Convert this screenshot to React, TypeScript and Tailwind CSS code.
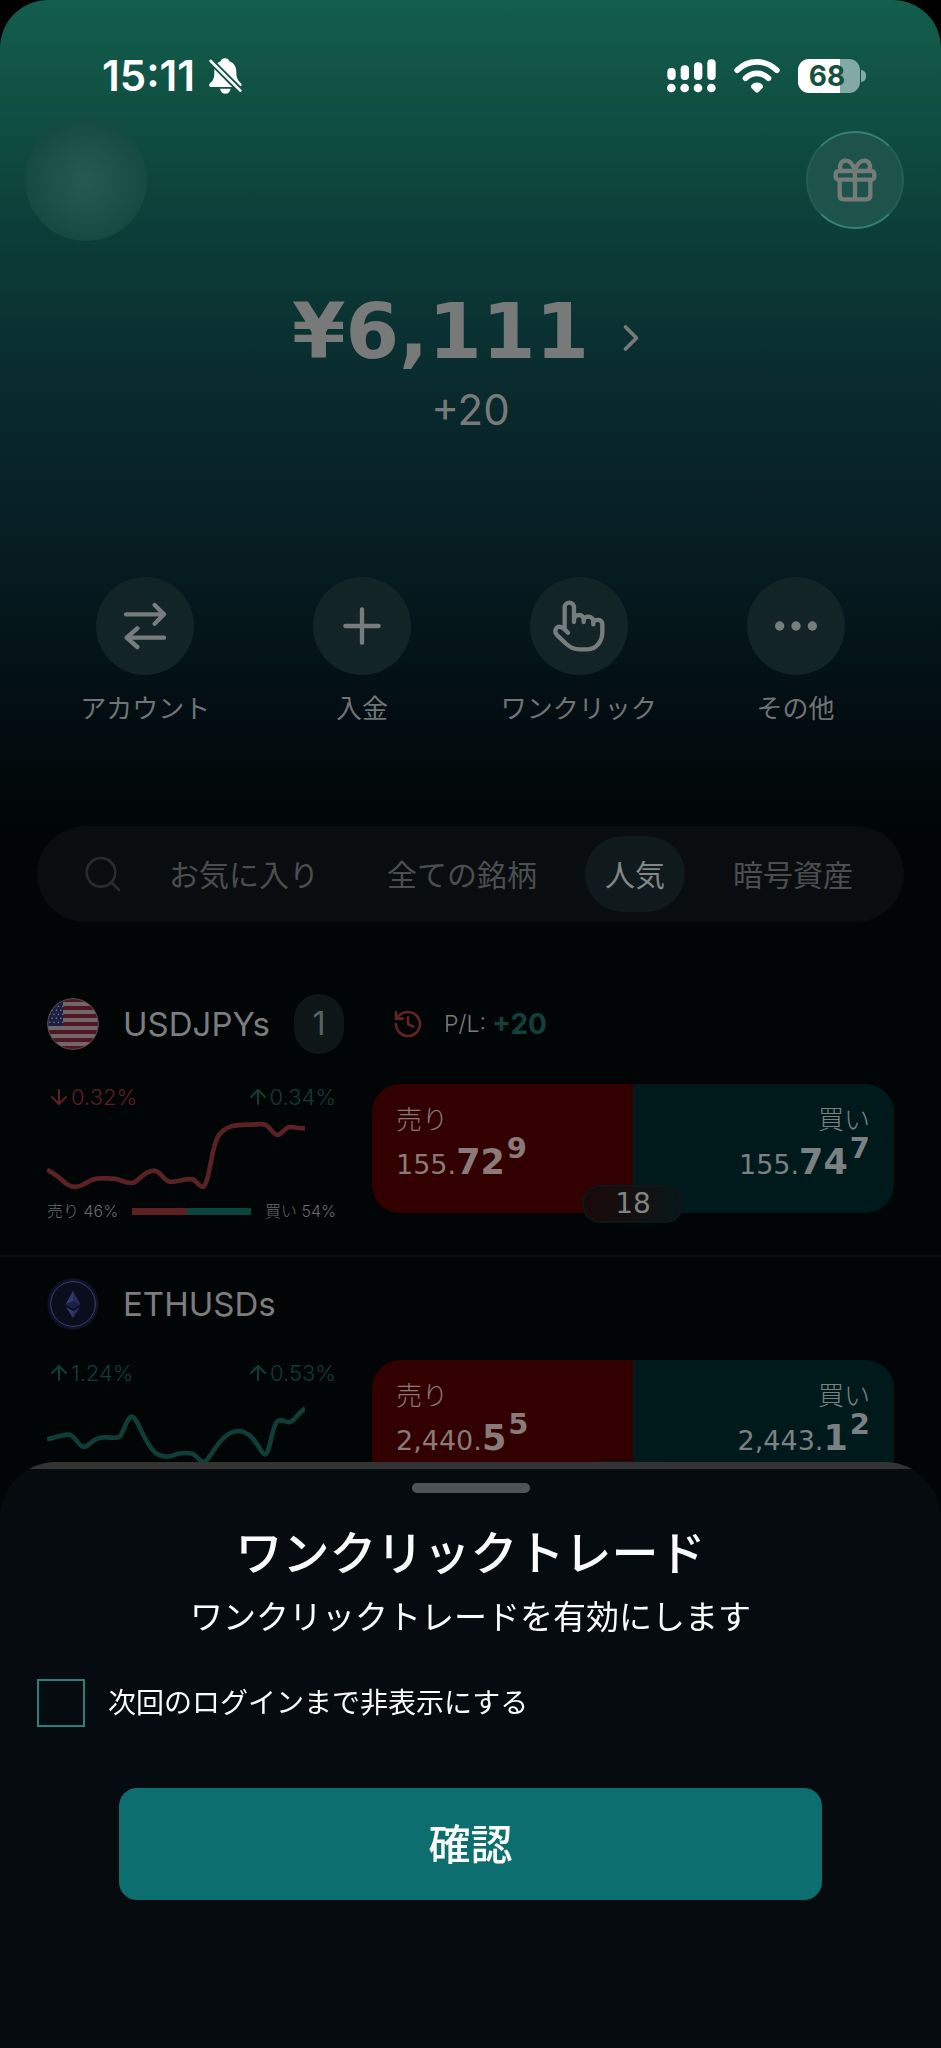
import { useState, type ReactNode } from 'react';
import { ArrowDown, ArrowUp, ChevronRight, History } from 'lucide-react';

type Trend = 'up' | 'down';

interface Quote {
  base: string;
  big: string;
  sup: string;
}

interface Instrument {
  symbol: string;
  icon: ReactNode;
  openCount?: number;
  profit?: string;
  low: { trend: Trend; value: string };
  high: { trend: Trend; value: string };
  chart: { path: string; trend: Trend };
  sellShare: number;
  sell: Quote;
  buy: Quote;
  spread: string;
}

function BellSlashIcon() {
  return (
    <svg viewBox="0 0 99 108" className="h-9 w-[33px]" aria-hidden="true">
      <mask id="bell-cut">
        <rect width="99" height="108" fill="#fff" />
        <path d="M-4 0L104 108" stroke="#000" strokeWidth="19" />
      </mask>
      <g mask="url(#bell-cut)" fill="#fff">
        <path d="M48 1c7 0 12 4 13 9 14 5 21 16 21 32 0 20 5 25 14 34 3 3 2 11-4 11H7c-7 0-8-7-4-11 10-9 13-14 13-34 0-16 6-27 19-32 1-5 6-9 13-9Z" />
        <path d="M33 92h32c-2 9-8 15-16 15s-14-6-16-15Z" />
      </g>
      <path d="M5 9l89 89" stroke="#fff" strokeWidth="8" strokeLinecap="round" />
    </svg>
  );
}

function SignalIcon() {
  return (
    <svg viewBox="0 0 147 102" className="h-[34px] w-[49px]" fill="#fff" aria-hidden="true">
      <rect x="1" y="27" width="25" height="36" rx="12" />
      <rect x="41" y="19" width="25" height="44" rx="12" />
      <rect x="81" y="10" width="25" height="53" rx="12" />
      <rect x="121" y="1" width="25" height="62" rx="12" />
      <circle cx="13" cy="87" r="13" />
      <circle cx="53" cy="87" r="13" />
      <circle cx="93" cy="87" r="13" />
      <circle cx="133" cy="87" r="13" />
    </svg>
  );
}

function WifiIcon() {
  return (
    <svg viewBox="0 0 137 102" className="h-[34px] w-[46px]" fill="none" aria-hidden="true">
      <path d="M9 34c33-34 85-34 119 0M34 58c20-20 49-20 69 0" stroke="#fff" strokeWidth="17" strokeLinecap="round" />
      <path d="M52 78c8-10 25-10 33 0 2 3 2 6 0 9L73 99c-3 3-6 3-9 0L52 87c-2-3-2-6 0-9Z" fill="#fff" />
    </svg>
  );
}

function GiftIcon() {
  return (
    <svg viewBox="0 0 132 132" className="size-11" fill="none" stroke="#757c78" strokeWidth="13" strokeLinejoin="round" aria-hidden="true">
      <rect x="8" y="39" width="116" height="26" rx="9" />
      <path d="M20 66v46q0 12 12 12h68q12 0 12-12V66M66 39v85" />
      <path d="M66 39C60 16 48 7 36 8c-14 2-20 19-10 31M66 39c6-23 18-32 30-31 14 2 20 19 10 31" />
    </svg>
  );
}

function TransferIcon() {
  return (
    <svg viewBox="0 0 144 144" className="size-12" fill="none" stroke="#777d7d" strokeWidth="13" strokeLinecap="round" strokeLinejoin="round" aria-hidden="true">
      <path d="M15 37h112M101 9l28 28-28 28M129 107H17M49 79l-32 28 32 28" />
    </svg>
  );
}

function PlusIcon() {
  return (
    <svg viewBox="0 0 144 144" className="size-12" fill="none" stroke="#777d7d" strokeWidth="13" strokeLinecap="round" aria-hidden="true">
      <path d="M22 72h100M72 22v100" />
    </svg>
  );
}

function HandIcon() {
  return (
    <svg viewBox="0 0 156 156" className="size-[52px]" fill="none" stroke="#777d7d" strokeWidth="13" strokeLinecap="round" strokeLinejoin="round" aria-hidden="true">
      <path d="M45 98L35 88V22a14 14 0 0 1 28 0v44" />
      <path d="M63 56c4-14 24-15 29 0v10M92 58c5-11 24-12 29 3v12" />
      <path d="M121 66c6-10 27-9 27 8v22c0 28-18 52-44 52H80c-16 0-28-5-40-16L13 106c-9-9-7-18-1-23s14-3 23 5" />
    </svg>
  );
}

function DotsIcon() {
  return (
    <svg viewBox="0 0 144 144" className="size-12" fill="#777d7d" aria-hidden="true">
      <circle cx="23" cy="72" r="14" />
      <circle cx="72" cy="72" r="14" />
      <circle cx="121" cy="72" r="14" />
    </svg>
  );
}

function SearchIcon() {
  return (
    <svg viewBox="0 0 108 108" className="size-9" fill="none" stroke="#282c2e" strokeWidth="8" strokeLinecap="round" aria-hidden="true">
      <circle cx="48" cy="49" r="43" />
      <path d="M80 80l22 22" />
    </svg>
  );
}

function UsFlag() {
  return (
    <svg viewBox="0 0 156 156" className="size-[52px] shrink-0" aria-hidden="true">
      <clipPath id="flag-clip">
        <circle cx="78" cy="78" r="76" />
      </clipPath>
      <g clipPath="url(#flag-clip)">
        <rect width="156" height="156" fill="#72666a" />
        <path d="M0 6h156M0 30h156M0 54h156M0 78h156M0 102h156M0 126h156M0 150h156" stroke="#4e1620" strokeWidth="12" />
        <rect width="48" height="84" fill="#1b2042" />
        <path d="M8 25h48M2 37h48M8 49h48M2 61h48M8 73h48" stroke="#72768a" strokeWidth="5" strokeLinecap="round" strokeDasharray="0.1 13" />
      </g>
      <circle cx="78" cy="78" r="76" fill="none" stroke="#564d51" strokeWidth="3" />
    </svg>
  );
}

function EthIcon() {
  return (
    <svg viewBox="0 0 156 156" className="size-[52px] shrink-0" aria-hidden="true">
      <circle cx="78" cy="78" r="77" fill="#0e1128" />
      <circle cx="78" cy="78" r="67" fill="#090d1c" stroke="#3e4163" strokeWidth="3" />
      <path d="M78 38L56 79l22 13Z" fill="#34396f" />
      <path d="M78 38l22 41-22 13Z" fill="#262b5c" />
      <path d="M58 79l20-11 20 11-20 13Z" fill="#1a1e48" />
      <path d="M56 86l22 13v21Z" fill="#34396f" />
      <path d="M100 86L78 99v21Z" fill="#262b5c" />
    </svg>
  );
}

const actions = [
  { label: 'アカウント', icon: <TransferIcon /> },
  { label: '入金', icon: <PlusIcon /> },
  { label: 'ワンクリック', icon: <HandIcon /> },
  { label: 'その他', icon: <DotsIcon /> },
];

const tabs = ['お気に入り', '全ての銘柄', '人気', '暗号資産'];

const instruments: Instrument[] = [
  {
    symbol: 'USDJPYs',
    icon: <UsFlag />,
    openCount: 1,
    profit: '+20',
    low: { trend: 'down', value: '0.32%' },
    high: { trend: 'up', value: '0.34%' },
    chart: {
      trend: 'down',
      path: 'M0 150C25 160 45 182 62 194C78 204 92 204 112 192C145 168 170 176 200 176C225 178 238 194 260 188C280 178 292 152 322 152C342 153 348 182 368 185C390 187 415 174 438 178C448 184 460 204 470 200C490 180 492 80 515 47C535 18 565 14 600 14C625 15 640 10 655 14C670 22 680 45 692 45C708 42 714 18 734 21C748 24 760 25 774 25',
    },
    sellShare: 46,
    sell: { base: '155.', big: '72', sup: '9' },
    buy: { base: '155.', big: '74', sup: '7' },
    spread: '18',
  },
  {
    symbol: 'ETHUSDs',
    icon: <EthIcon />,
    low: { trend: 'up', value: '1.24%' },
    high: { trend: 'up', value: '0.53%' },
    chart: {
      trend: 'up',
      path: 'M0 130C25 124 50 114 68 116C85 120 95 153 112 153C130 150 130 128 168 124C190 122 208 130 218 122C232 106 240 62 255 62C272 64 290 140 325 170C345 186 372 184 390 174C410 170 425 170 438 174C450 180 460 198 472 198C490 192 520 105 575 105C625 108 640 175 654 175C670 172 675 85 692 75C705 68 715 80 730 78C745 72 755 48 774 38',
    },
    sellShare: 52,
    sell: { base: '2,440.', big: '5', sup: '5' },
    buy: { base: '2,443.', big: '1', sup: '2' },
    spread: '257',
  },
];

function StatusBar() {
  return (
    <div className="flex h-[104px] items-end justify-between pr-[75px] pb-2 pl-[102px]">
      <div className="flex h-10 items-center gap-3.5">
        <span className="text-[42px] leading-10 font-semibold text-white">15:11</span>
        <BellSlashIcon />
      </div>
      <div className="flex h-10 items-center gap-[18px]">
        <SignalIcon />
        <WifiIcon />
        <div className="flex items-center gap-px">
          <span className="flex h-[34px] w-[62px] items-center justify-center rounded-[11px] bg-linear-to-r from-white from-68% to-[#82aaa2] to-68% pr-1 text-[28px] leading-none font-bold text-[#16513f]">
            68
          </span>
          <span className="h-3 w-[5px] rounded-r-full bg-[#82aaa2]"></span>
        </div>
      </div>
    </div>
  );
}

function Change({ trend, value }: { trend: Trend; value: string }) {
  const Arrow = trend === 'up' ? ArrowUp : ArrowDown;
  return (
    <span className={`flex items-center text-[22px] font-light ${trend === 'up' ? 'text-[#123e38]' : 'text-[#5e2022]'}`}>
      <Arrow className="size-6" strokeWidth={2} />
      {value}
    </span>
  );
}

function Price({ quote }: { quote: Quote }) {
  return (
    <span className="mt-2 flex items-baseline font-['DejaVu_Sans'] leading-8">
      <span className="text-[27px]">{quote.base}</span>
      <span className="text-[35px] font-bold">{quote.big}</span>
      <span className="relative -top-4 ml-0.5 text-[29px] leading-6 font-bold">{quote.sup}</span>
    </span>
  );
}

function InstrumentRow({ item }: { item: Instrument }) {
  return (
    <section className="border-b-2 border-[#0d1011] px-[47px] pb-8">
      <div className="flex items-center">
        {item.icon}
        <h2 className="ml-6 text-[33px] leading-10 text-[#7c7d7e]">{item.symbol}</h2>
        {item.openCount && (
          <span className="ml-6 flex h-[60px] w-[50px] items-center justify-center rounded-full bg-[#0e1617] text-[32px] text-[#5c6263]">
            {item.openCount}
          </span>
        )}
        {item.profit && (
          <div className="ml-12 flex items-center">
            <History className="size-8 text-[#642426]" strokeWidth={2} />
            <span className="ml-5 text-[23px] font-light text-[#7b7c7d]">P/L:</span>
            <span className="ml-1.5 text-[28px] font-bold text-[#12403a]">{item.profit}</span>
          </div>
        )}
      </div>

      <div className="mt-[30px] flex items-start gap-9">
        <div className="w-[289px] shrink-0">
          <div className="flex h-[26px] items-center justify-between">
            <Change {...item.low} />
            <Change {...item.high} />
          </div>
          <svg
            viewBox="0 0 774 225"
            className={`mt-2.5 h-[75px] w-[258px] ${item.chart.trend === 'up' ? 'text-[#113d38]' : 'text-[#5b2225]'}`}
            fill="none"
            stroke="currentColor"
            strokeWidth="14"
            aria-hidden="true"
          >
            <path d={item.chart.path} />
          </svg>
          <div className="mt-1 flex h-6 items-center justify-between gap-3.5 text-base font-light whitespace-nowrap text-[#6a6b6c]">
            <span>売り {item.sellShare}%</span>
            <span className="flex h-[7px] flex-1 bg-[#0c4440]">
              <span className="bg-[#5e2023]" style={{ width: `${item.sellShare}%` }}></span>
            </span>
            <span>買い {100 - item.sellShare}%</span>
          </div>
        </div>

        {/* Sell / buy */}
        <div className="relative flex h-[129px] flex-1 text-[26px] text-[#8a7b7a]">
          <button type="button" className="flex flex-1 flex-col items-start rounded-l-[28px] bg-[#330000] px-6 pt-[18px]">
            <span className="leading-9 font-light">売り</span>
            <Price quote={item.sell} />
          </button>
          <button type="button" className="flex flex-1 flex-col items-end rounded-r-[28px] bg-[#001a1b] px-6 pt-[18px] text-[#7b8182]">
            <span className="leading-9 font-light">買い</span>
            <Price quote={item.buy} />
          </button>
          <span className="absolute -bottom-2.5 left-1/2 flex h-[38px] w-[102px] -translate-x-1/2 items-center justify-center rounded-full border-2 border-[#0c1718] bg-linear-to-r from-[#1a0809] to-[#071718] font-['DejaVu_Sans'] text-[28px] text-[#818383]">
            {item.spread}
          </span>
        </div>
      </div>
    </section>
  );
}

function OneClickSheet() {
  const [hideUntilLogin, setHideUntilLogin] = useState(false);

  return (
    <div
      role="dialog"
      aria-labelledby="sheet-title"
      className="fixed inset-x-0 bottom-0 overflow-hidden rounded-t-[56px] bg-[#060b0f] pb-[148px] text-[#fafbfb]"
    >
      <div className="h-[7px] bg-[#333333]"></div>
      <div className="mx-auto mt-3.5 h-2.5 w-[118px] rounded-full bg-[#505456]"></div>
      <h1 id="sheet-title" className="mt-7 text-center text-[47px] leading-[64px] font-medium">
        ワンクリックトレード
      </h1>
      <p className="mt-2 text-center text-[33px] leading-12">ワンクリックトレードを有効にします</p>
      <label className="mt-[38px] flex items-center gap-[23px] px-[37px] text-[28px] leading-12">
        <input
          type="checkbox"
          checked={hideUntilLogin}
          onChange={(e) => setHideUntilLogin(e.target.checked)}
          className="size-12 appearance-none border-2 border-[#2a8078] checked:bg-[#2a8078]"
        />
        次回のログインまで非表示にする
      </label>
      <div className="mt-[61px] px-[119px]">
        <button type="button" className="h-28 w-full rounded-[18px] bg-[#0c6e6e] text-[42px] font-medium">
          確認
        </button>
      </div>
    </div>
  );
}

export default function App() {
  const [activeTab, setActiveTab] = useState('人気');

  return (
    <div className="h-screen overflow-hidden bg-black font-['Inter','Noto_Sans_CJK_JP',sans-serif]" lang="ja">
      <div className="min-h-screen rounded-t-[48px] bg-[#010506] bg-[linear-gradient(to_bottom,#125e4d_0px,#105144_95px,#0b3a36_255px,#09292d_400px,#061c21_560px,#030f13_700px,#010506_830px)]">
        <StatusBar />

        <header className="flex items-center justify-between pt-[15px] pr-[37px] pl-[25px]">
          <div className="size-[122px] rounded-full bg-[radial-gradient(circle,#265951_0%,#1d5149_40%,#154a42_70%)]"></div>
          <button
            type="button"
            aria-label="ギフト"
            className="flex size-[98px] items-center justify-center rounded-full border-2 border-x-[#205e56] border-y-[#347f77] bg-[#1e534c]"
          >
            <GiftIcon />
          </button>
        </header>

        {/* Balance */}
        <div className="mt-[53px] flex flex-col items-center text-[#777a79]">
          <button type="button" className="flex items-center gap-5 pl-1 font-['DejaVu_Sans'] text-[77px] leading-[76px] font-bold">
            ¥6,111
            <ChevronRight className="mt-3 size-11" strokeWidth={2} />
          </button>
          <span className="mt-5 text-[42px] leading-10">+20</span>
        </div>

        <nav className="mt-[147px] grid grid-cols-4 px-[37px]">
          {actions.map((action) => (
            <button key={action.label} type="button" className="flex flex-col items-center gap-[18px] text-[26px] leading-8 text-[#707474]">
              <span className="flex size-[98px] items-center justify-center rounded-full bg-[#122426]">{action.icon}</span>
              {action.label}
            </button>
          ))}
        </nav>

        {/* Category tabs */}
        <div className="mx-[37px] mt-[101px] flex h-24 items-center gap-7 rounded-full bg-[#090d0f] pl-12 whitespace-nowrap">
          <button type="button" aria-label="検索">
            <SearchIcon />
          </button>
          {tabs.map((tab) => (
            <button
              key={tab}
              type="button"
              onClick={() => setActiveTab(tab)}
              className={`h-[76px] rounded-full px-5 pt-0.5 text-[30px] ${tab === activeTab ? 'bg-[#10191b] text-[#818686]' : 'text-[#4b4e4f]'}`}
            >
              {tab}
            </button>
          ))}
        </div>

        <div className="mt-[72px] flex flex-col gap-[21px]">
          {instruments.map((item) => (
            <InstrumentRow key={item.symbol} item={item} />
          ))}
        </div>
      </div>

      <OneClickSheet />
    </div>
  );
}
